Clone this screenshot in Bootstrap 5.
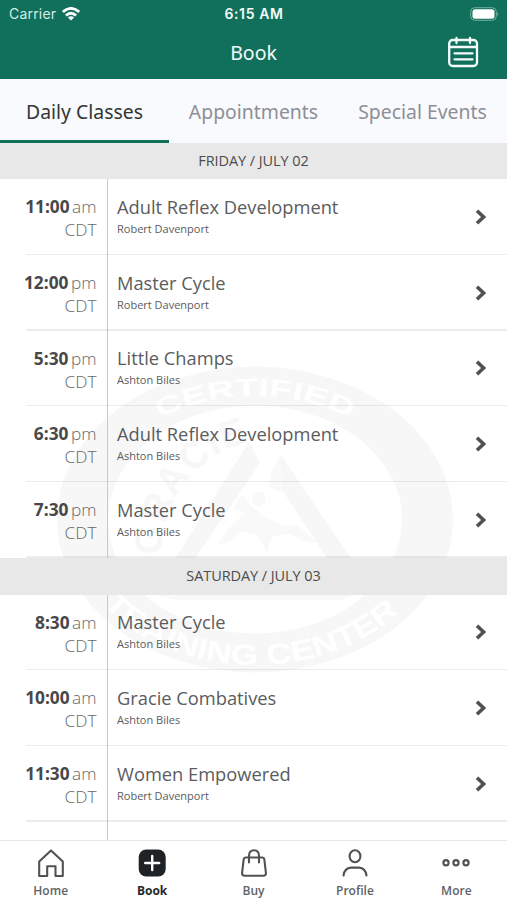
<!DOCTYPE html>
<html lang="en">
<head>
<meta charset="utf-8">
<meta name="viewport" content="width=device-width, initial-scale=1">
<title>Book</title>
<link href="https://cdn.jsdelivr.net/npm/bootstrap@5.3.0/dist/css/bootstrap.min.css" rel="stylesheet">
<style>
body{font-family:"Open Sans","Noto Sans",sans-serif;color:#5b5c5e;background:#fff}
.phone{width:507px;height:900px}
.top-area{background:#11705c;height:79px;color:#f4fbf9}
.status{height:28px;font:400 14px/28px Inter,sans-serif;padding:0 8px 0 9px}
.status .carrier{letter-spacing:.2px;color:#d5ece6}
.status .clock{font-weight:600;font-size:14px;letter-spacing:.6px}
.side{width:120px}
.title-row{height:51px;padding:0 28px}
.page-title{font:400 19.5px/48px "Noto Sans",sans-serif;padding-bottom:1px}
.tabs-row{height:63.5px;background:#f8fafd;font-family:"Noto Sans",sans-serif;font-size:19.4px}
.tabs-row .nav-link{color:#8d8f96;padding:5px 0 0;height:63.5px;border-bottom:3.5px solid transparent;white-space:nowrap}
.tabs-row .nav-link.active{color:#333537;border-color:#11705c}
.day{height:36.8px;background:#e8e8e8;font-size:14.5px;letter-spacing:-.08px;color:#4c4c4c}
.schedule{height:697px}
.watermark{left:55px;top:222.5px}
.slot{height:75.72px}
.time{width:107.5px;border-right:1.5px solid #c9c9c9;padding:16px 10px 0 0;font-size:17.3px;line-height:23px;font-weight:300;color:#686868}
.time b{font-weight:700;color:#484848}
.ap{margin-left:2.5px}
.line{left:26px;right:0;bottom:0;height:1.5px;background:rgba(0,0,0,.075)}
.info{padding:14.5px 0 0 9.5px}
.cls{font-size:18.3px;line-height:25px;height:25px}
.coach{font-size:11px;line-height:19px}
.chev{margin:29.5px 20px 0 0;width:12px;height:16px}
.bottom-bar{height:60px;border-top:1.5px solid #e6e7e8;background:#fff;font-size:12px;font-weight:600;color:#606366}
.bottom-bar .nav-link{padding:7.5px 0 0;color:inherit;line-height:17px}
.bottom-bar .nav-link.active{color:#25282b;font-weight:700}
.bottom-bar svg{display:block;margin:0 auto 4px}
</style>
</head>
<body>
<main class="phone d-flex flex-column overflow-hidden">
<header class="top-area flex-shrink-0">
  <div class="status d-flex justify-content-between">
    <div class="side carrier d-flex align-items-center">Carrier
      <svg style="margin-left:6px" width="18" height="14" viewBox="0 0 18 14" fill="none" stroke="#fff" stroke-width="2.8"><path d="M.8 5Q9-2.2 17.2 5M3.9 8.5Q9 3.9 14.1 8.5"/><path d="M9 13.6 5.9 10.5Q9 7.8 12.1 10.5Z" fill="#fff" stroke="none"/></svg>
    </div>
    <div class="clock">6:15 AM</div>
    <div class="side d-flex justify-content-end align-items-center">
      <svg width="30" height="14" viewBox="0 0 30 14"><rect x="1.7" y=".7" width="25.600" height="12.600" rx="4" fill="none" stroke="#73aea1"/><rect x="3.500" y="2.300" width="22" height="9.400" rx="2.500" fill="#fff"/><path d="M28.300 5q2 2 0 4z" fill="#73aea1"/></svg>
    </div>
  </div>
  <div class="title-row d-flex justify-content-between align-items-center">
    <span class="side"></span><h1 class="page-title m-0">Book</h1>
    <div class="side d-flex justify-content-end"><svg class="mb-1" width="32" height="32" viewBox="0 0 32 32" fill="none" stroke="#f4fbf9" stroke-width="2.3" stroke-linecap="round"><rect x="2.2" y="4" width="27.8" height="26" rx="3.5"/><path d="M2 11h28M9.5 2v5M23 2v5M7.500 17.300h18M7.500 23.300h18"/></svg></div>
  </div>
</header>
<nav class="tabs-row nav flex-nowrap flex-shrink-0">
  <a class="nav-link active col-4 d-flex align-items-center justify-content-center">Daily Classes</a>
  <a class="nav-link col-4 d-flex align-items-center justify-content-center">Appointments</a>
  <a class="nav-link col-4 d-flex align-items-center justify-content-center">Special Events</a>
</nav>
<section class="schedule position-relative overflow-hidden flex-shrink-0">
  <svg class="watermark position-absolute" width="400" height="308" viewBox="55 365 400 308">
    <defs><path id="arcTop" d="M89 520A166 124 0 0 1 421 520"/><path id="arcBottom" d="M68 520A187 145 0 0 0 442 520"/><path id="arcLeft" d="M162 562A112 112 0 0 1 262 440"/></defs>
    <path fill="#f7f7f7" fill-rule="evenodd" d="M57 519.5a198 153 0 1 0 396 0a198 153 0 1 0-396 0M108 519.5a147 114 0 1 1 294 0a147 114 0 1 1-294 0"/>
    <g font-family="Liberation Sans,sans-serif" font-weight="700" text-anchor="middle">
      <text font-size="25" fill="#fff"><textPath href="#arcTop" startOffset="50%" textLength="198" lengthAdjust="spacingAndGlyphs">CERTIFIED</textPath></text>
      <text font-size="29" fill="#fff"><textPath href="#arcBottom" startOffset="49%" textLength="325" lengthAdjust="spacingAndGlyphs">TRAINING CENTER</textPath></text>
      <text font-size="38" fill="#f7f7f7"><textPath href="#arcLeft" startOffset="48%" textLength="155">GRACIE</textPath></text>
    </g>
    <path d="M249 442 174 560H194L260 463Z" fill="#f7f7f7"/>
    <path d="M281 455 271 473 328 560H352Z" fill="#f7f7f7"/>
    <g fill="#f9f9f9"><circle cx="259" cy="499" r="7"/><path d="M271 473 281 455 282 492 269 487Z"/><path d="M217 546 230 527 245 513 233 509 242 495 252 507 267 518 282 525 298 526 318 543 304 541 289 534 272 537 267 553 258 535 242 531 232 540Z"/></g>
    <path d="M155 595H355L340 600H175Z" fill="#f9f9f9"/>
  </svg>
  <div id="agenda" class="position-relative"></div>
</section>
<nav class="bottom-bar nav nav-justified flex-nowrap flex-shrink-0 text-center">
  <a class="nav-link"><svg width="28" height="30" viewBox="0 0 28 30" fill="none" stroke="#505356" stroke-width="2.1" stroke-linejoin="round"><path d="M2.2 28V13.6L14 2.4l11.8 11.2V28h-7.3V18.2H10.2V28z"/></svg>Home</a>
  <a class="nav-link active"><svg width="28" height="30" viewBox="0 0 28 30"><rect x=".7" y="1.5" width="27" height="27" rx="7.5" fill="#202326"/><path d="M14.2 8v14M7.2 15h14" stroke="#fff" stroke-width="2.4" stroke-linecap="round"/></svg>Book</a>
  <a class="nav-link"><svg width="28" height="30" viewBox="0 0 28 30" fill="none" stroke="#505356" stroke-width="2.1" stroke-linecap="round" stroke-linejoin="round"><path d="M5.5 9.5h17q1.6 0 1.8 1.6l1.6 13.7q.2 2.9-2.5 2.9H4.6q-2.7 0-2.5-2.9l1.6-13.7Q3.9 9.5 5.5 9.5M9 14.5V8q0-5.700 5-5.700T19 8v6.500"/></svg>Buy</a>
  <a class="nav-link"><svg width="28" height="30" viewBox="0 0 28 30" fill="none" stroke="#505356" stroke-width="2.1" stroke-linecap="round"><ellipse cx="14" cy="8.3" rx="5.4" ry="6"/><path d="M2.5 27.5Q3.5 20 10 19.6h8q6.5.4 7.5 7.9"/></svg>Profile</a>
  <a class="nav-link"><svg width="28" height="30" viewBox="0 0 28 30" fill="none" stroke="#505356" stroke-width="2.2"><circle cx="4" cy="14.8" r="2.6"/><circle cx="14" cy="14.8" r="2.6"/><circle cx="24" cy="14.8" r="2.6"/></svg>More</a>
</nav>
</main>
<script src="https://cdn.jsdelivr.net/npm/bootstrap@5.3.0/dist/js/bootstrap.bundle.min.js"></script>
<script>
const days=[["FRIDAY / JULY 02",[["11:00","am","Adult Reflex Development","Robert Davenport"],["12:00","pm","Master Cycle","Robert Davenport"],["5:30","pm","Little Champs","Ashton Biles"],["6:30","pm","Adult Reflex Development","Ashton Biles"],["7:30","pm","Master Cycle","Ashton Biles"]]],
["SATURDAY / JULY 03",[["8:30","am","Master Cycle","Ashton Biles"],["10:00","am","Gracie Combatives","Ashton Biles"],["11:30","am","Women Empowered","Robert Davenport"],null]]];
const row=r=>r?`<div class="slot d-flex position-relative"><div class="time text-end flex-shrink-0"><b>${r[0]}</b><span class="ap">${r[1]}</span><br>CDT</div><div class="info flex-grow-1"><div class="cls">${r[2]}</div><div class="coach">${r[3]}</div></div><svg class="chev" viewBox="0 0 12 16" fill="none" stroke="#505153" stroke-width="3.6"><path d="M2 1.7 8.6 8 2 14.3"/></svg><div class="line position-absolute"></div></div>`:'<div class="slot d-flex"><div class="time"></div></div>';
document.getElementById("agenda").innerHTML=days.map(d=>`<div class="day d-flex align-items-center justify-content-center">${d[0]}</div>`+d[1].map(row).join("")).join("");
</script>
</body>
</html>
